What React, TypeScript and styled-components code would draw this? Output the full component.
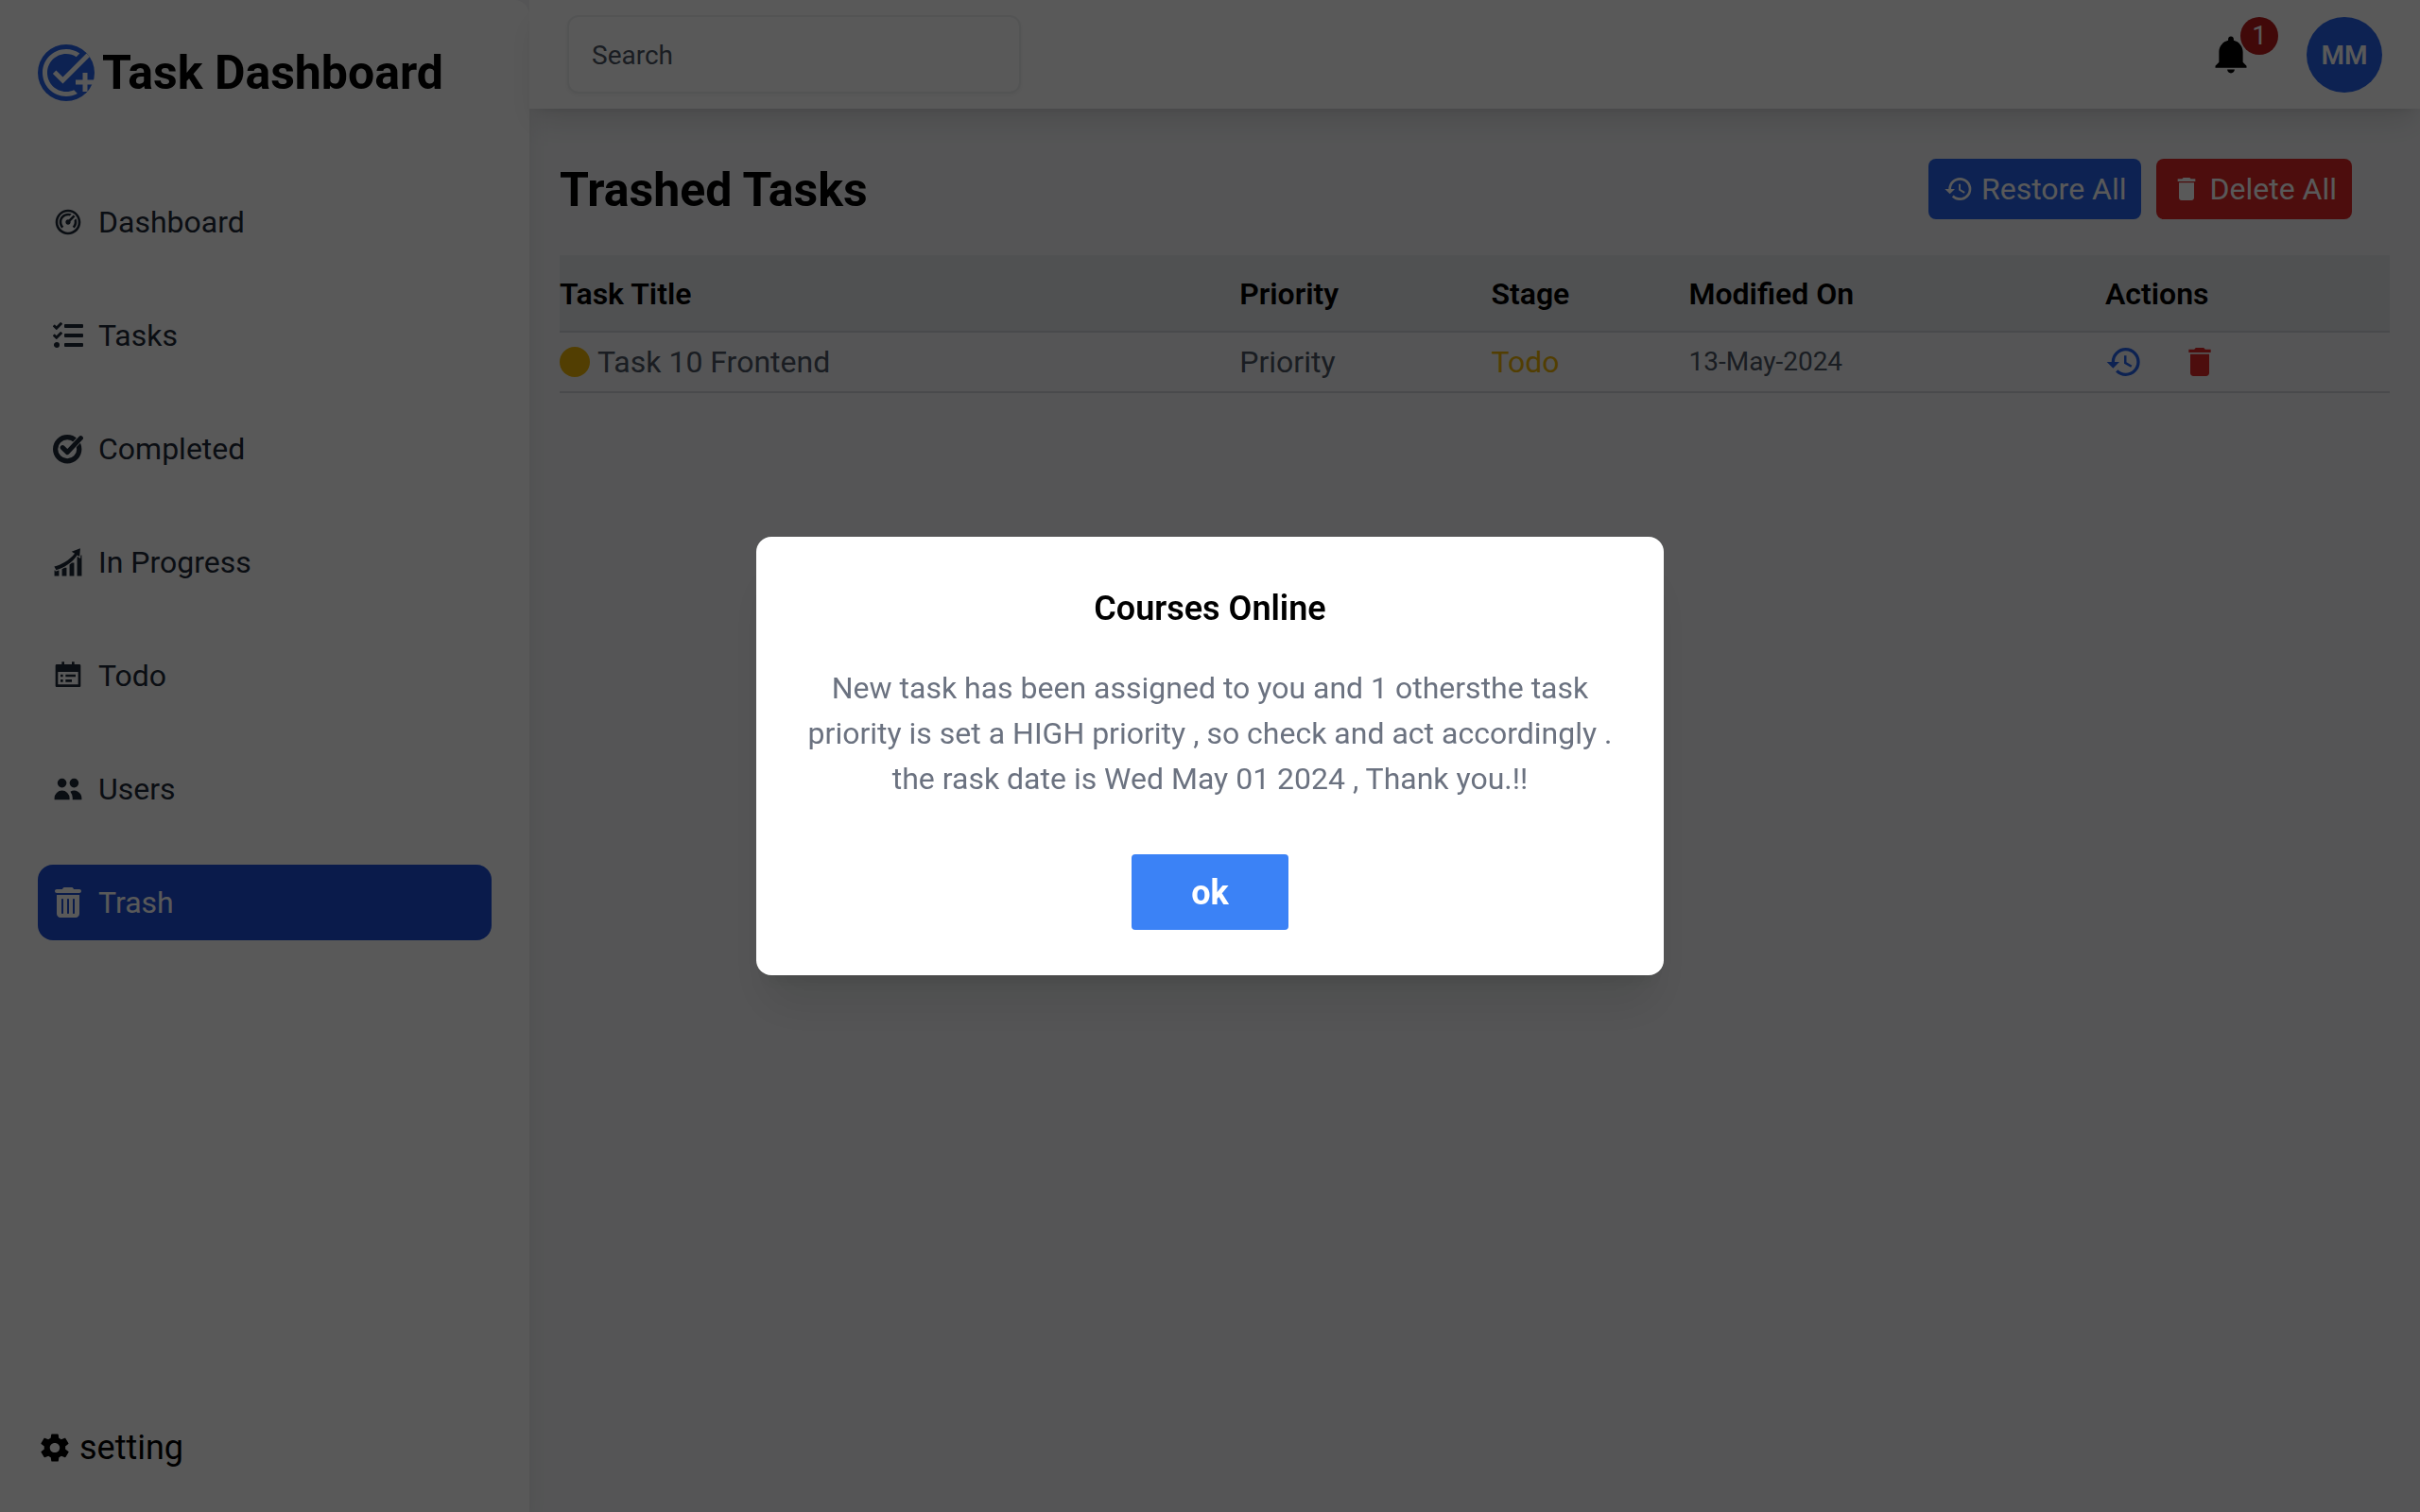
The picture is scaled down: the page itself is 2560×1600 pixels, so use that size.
import React, { useState } from 'react';
import styled, { createGlobalStyle, css } from 'styled-components';
import { RiCalendarTodoFill, RiDashboard2Line } from 'react-icons/ri';
import { FaTasks } from 'react-icons/fa';
import { FaTrashCan } from 'react-icons/fa6';
import { GiProgression } from 'react-icons/gi';
import { HiUsers } from 'react-icons/hi';
import { IoMdNotifications, IoMdSettings } from 'react-icons/io';
import { MdAddTask, MdDelete, MdOutlineRestore } from 'react-icons/md';

const GlobalStyle = createGlobalStyle`
  *, *::before, *::after { box-sizing: border-box; }
  body {
    margin: 0;
    background: #f3f4f6;
    color: #000;
    font-family: Roboto, "Liberation Sans", sans-serif;
    font-size: 32px;
    line-height: 48px;
  }
  h1, h2, p { margin: 0; }
  button, input { font: inherit; color: inherit; }
  button { border: 0; cursor: pointer; }
  svg { display: block; flex-shrink: 0; }
`;

const Page = styled.div`
  display: grid;
  grid-template-columns: 560px minmax(0, 1fr);
  min-height: 100vh;
`;

const Sidebar = styled.aside`
  display: flex;
  flex-direction: column;
  padding: 40px;
  background: #fff;
  border-radius: 0 16px 0 0;
  box-shadow: 0 20px 30px -6px rgba(0, 0, 0, 0.1), 0 8px 12px -8px rgba(0, 0, 0, 0.1);
`;

const Brand = styled.h1`
  display: flex;
  align-items: center;
  gap: 8px;
  font-size: 50px;
  font-weight: 700;
  line-height: 74px;
  white-space: nowrap;
`;

const BrandMark = styled.span`
  border-radius: 50%;
  background: #2563eb;
  color: #fff;
  font-size: 60px;
`;

const Nav = styled.nav`
  display: flex;
  flex-direction: column;
  gap: 40px;
  flex: 1;
  padding-top: 81px;
`;

const NavItem = styled.a<{ $active?: boolean }>`
  display: flex;
  align-items: center;
  gap: 16px;
  padding: 16px;
  border-radius: 16px;
  color: #1f2937;
  text-decoration: none;
  ${(p) =>
    p.$active &&
    css`
      background: #1d4ed8;
      color: #fff;
    `}
`;

const SettingsLink = styled.a`
  display: flex;
  align-items: center;
  gap: 8px;
  color: #000;
  font-size: 36px;
  line-height: 56px;
  text-decoration: none;
`;

const Content = styled.div`
  display: flex;
  flex-direction: column;
`;

const TopBar = styled.header`
  display: flex;
  align-items: center;
  justify-content: space-between;
  padding: 16px 40px;
  background: #fff;
  box-shadow: 0 20px 30px -6px rgba(0, 0, 0, 0.1), 0 8px 12px -8px rgba(0, 0, 0, 0.1);
`;

const SearchBox = styled.input`
  width: 480px;
  height: 83px;
  padding: 2px 24px 0;
  border: 2px solid #eeeff1;
  border-radius: 12px;
  background: #fff;
  box-shadow: 0 2px 4px rgba(0, 0, 0, 0.05);
  font-size: 28px;
  outline: none;
  &::placeholder { color: #4b5563; opacity: 1; }
`;

const UserArea = styled.div`
  display: flex;
  align-items: center;
  gap: 56px;
`;

const BellButton = styled.button`
  position: relative;
  padding: 0;
  background: none;
  color: #000;
  font-size: 48px;
`;

const Badge = styled.span`
  position: absolute;
  top: -16px;
  right: -26px;
  width: 40px;
  height: 40px;
  border-radius: 50%;
  background: #b91c1c;
  color: #fff;
  font-size: 28px;
  line-height: 40px;
  text-align: center;
`;

const Avatar = styled.button`
  width: 80px;
  height: 80px;
  padding: 2px 0 0;
  border-radius: 50%;
  background: #2563eb;
  color: #fff;
  font-size: 28px;
  font-weight: 600;
`;

const Main = styled.main`
  padding: 32px;
`;

const TitleRow = styled.div`
  display: flex;
  align-items: flex-end;
  justify-content: space-between;
  padding: 21px 40px 38px 0;
`;

const Title = styled.h2`
  font-size: 50px;
  font-weight: 700;
  line-height: 62px;
`;

const ButtonGroup = styled.div`
  display: flex;
  gap: 16px;
`;

const ActionButton = styled.button<{ $color: string }>`
  display: flex;
  align-items: center;
  gap: 8px;
  padding: 8px 16px;
  border-radius: 8px;
  background: ${(p) => p.$color};
  color: #fff;
`;

const Table = styled.table`
  width: 100%;
  table-layout: fixed;
  border-collapse: separate;
  border-spacing: 0;
  text-align: left;
`;

const Col = styled.col<{ $width: string }>`
  width: ${(p) => p.$width};
`;

const Th = styled.th`
  padding: 17px 0 15px;
  border-bottom: 2px solid #d1d5db;
  background: #e5e7eb;
  font-weight: 600;
`;

const Td = styled.td<{ $color?: string; $small?: boolean }>`
  padding: 7px 0;
  border-bottom: 2px solid #d1d5db;
  color: ${(p) => p.$color ?? '#4b5563'};
  font-size: ${(p) => (p.$small ? '28px' : '32px')};
`;

const Inline = styled.div<{ $gap: number }>`
  display: flex;
  align-items: center;
  gap: ${(p) => p.$gap}px;
`;

const Dot = styled.span`
  width: 32px;
  height: 32px;
  border-radius: 50%;
  background: #eab308;
`;

const IconButton = styled.button<{ $color: string }>`
  padding: 0;
  background: none;
  color: ${(p) => p.$color};
  font-size: 40px;
`;

const Overlay = styled.div`
  position: fixed;
  inset: 0;
  display: flex;
  align-items: center;
  justify-content: center;
  background: rgba(0, 0, 0, 0.65);
`;

const Dialog = styled.section`
  display: flex;
  flex-direction: column;
  align-items: center;
  width: 100%;
  max-width: 960px;
  padding: 48px;
  border-radius: 16px;
  background: #fff;
  box-shadow: 0 40px 50px -10px rgba(0, 0, 0, 0.1), 0 16px 20px -12px rgba(0, 0, 0, 0.1);
  text-align: center;
`;

const DialogTitle = styled.h2`
  font-size: 36px;
  font-weight: 600;
  line-height: 56px;
`;

const DialogText = styled.p`
  padding: 32px 0 56px;
  color: #6b7280;
`;

const OkButton = styled.button`
  padding: 13px 63px 11px;
  border-radius: 4px;
  background: #3b82f6;
  color: #fff;
  font-size: 36px;
  font-weight: 700;
  line-height: 56px;
`;

/* Thick ring crossed by a check mark that keeps a thin clear edge around it. */
function CompletedIcon() {
  const check = 'M10.2 14.6 L15.3 19.6 L29.4 4.6';
  return (
    <svg width="1em" height="1em" viewBox="0 0 32 32" fill="none" stroke="currentColor" strokeLinejoin="round">
      <mask id="check-gap" maskUnits="userSpaceOnUse" x="0" y="0" width="32" height="32">
        <rect width="32" height="32" fill="#fff" stroke="none" />
        <path d={check} stroke="#000" strokeWidth="6.6" strokeLinecap="round" />
      </mask>
      <circle cx="15.2" cy="16.2" r="12.6" strokeWidth="5.2" mask="url(#check-gap)" />
      <path d={check} strokeWidth="5" strokeLinecap="round" />
    </svg>
  );
}

const links = [
  { label: 'Dashboard', Icon: RiDashboard2Line },
  { label: 'Tasks', Icon: FaTasks },
  { label: 'Completed', Icon: CompletedIcon },
  { label: 'In Progress', Icon: GiProgression },
  { label: 'Todo', Icon: RiCalendarTodoFill },
  { label: 'Users', Icon: HiUsers },
  { label: 'Trash', Icon: FaTrashCan, active: true },
];

const trashed = [{ title: 'Task 10 Frontend', priority: 'Priority', stage: 'Todo', date: '13-May-2024' }];

export default function App() {
  const [open, setOpen] = useState(true);
  return (
    <>
      <GlobalStyle />
      <Page>
        <Sidebar>
          <Brand>
            <BrandMark>
              <MdAddTask />
            </BrandMark>
            Task Dashboard
          </Brand>
          <Nav>
            {links.map(({ label, Icon, active }) => (
              <NavItem key={label} href="#" $active={active}>
                <Icon />
                {label}
              </NavItem>
            ))}
          </Nav>
          <SettingsLink href="#">
            <IoMdSettings />
            setting
          </SettingsLink>
        </Sidebar>
        <Content>
          <TopBar>
            <SearchBox type="search" placeholder="Search" aria-label="Search" />
            <UserArea>
              <BellButton aria-label="Notifications">
                <IoMdNotifications />
                <Badge>1</Badge>
              </BellButton>
              <Avatar>MM</Avatar>
            </UserArea>
          </TopBar>
          <Main>
            <TitleRow>
              <Title>Trashed Tasks</Title>
              <ButtonGroup>
                <ActionButton $color="#2563eb">
                  <MdOutlineRestore />
                  Restore All
                </ActionButton>
                <ActionButton $color="#dc2626">
                  <MdDelete />
                  Delete All
                </ActionButton>
              </ButtonGroup>
            </TitleRow>
            <Table>
              <colgroup>
                <Col $width="37.15%" />
                <Col $width="13.75%" />
                <Col $width="10.8%" />
                <Col $width="22.75%" />
                <Col $width="auto" />
              </colgroup>
              <thead>
                <tr>
                  <Th>Task Title</Th>
                  <Th>Priority</Th>
                  <Th>Stage</Th>
                  <Th>Modified On</Th>
                  <Th>Actions</Th>
                </tr>
              </thead>
              <tbody>
                {trashed.map((t) => (
                  <tr key={t.title}>
                    <Td>
                      <Inline $gap={8}>
                        <Dot />
                        {t.title}
                      </Inline>
                    </Td>
                    <Td>{t.priority}</Td>
                    <Td $color="#eab308">{t.stage}</Td>
                    <Td $small>{t.date}</Td>
                    <Td>
                      <Inline $gap={40}>
                        <IconButton $color="#2563eb" aria-label="Restore task">
                          <MdOutlineRestore />
                        </IconButton>
                        <IconButton $color="#dc2626" aria-label="Delete task">
                          <MdDelete />
                        </IconButton>
                      </Inline>
                    </Td>
                  </tr>
                ))}
              </tbody>
            </Table>
          </Main>
        </Content>
      </Page>
      {open && (
        <Overlay>
          <Dialog role="dialog" aria-modal="true" aria-labelledby="notice-title">
            <DialogTitle id="notice-title">Courses Online</DialogTitle>
            <DialogText>
              New task has been assigned to you and 1 othersthe task priority is set a HIGH priority , so check and
              act accordingly . the rask date is Wed May 01 2024 , Thank you.!!
            </DialogText>
            <OkButton onClick={() => setOpen(false)}>ok</OkButton>
          </Dialog>
        </Overlay>
      )}
    </>
  );
}
